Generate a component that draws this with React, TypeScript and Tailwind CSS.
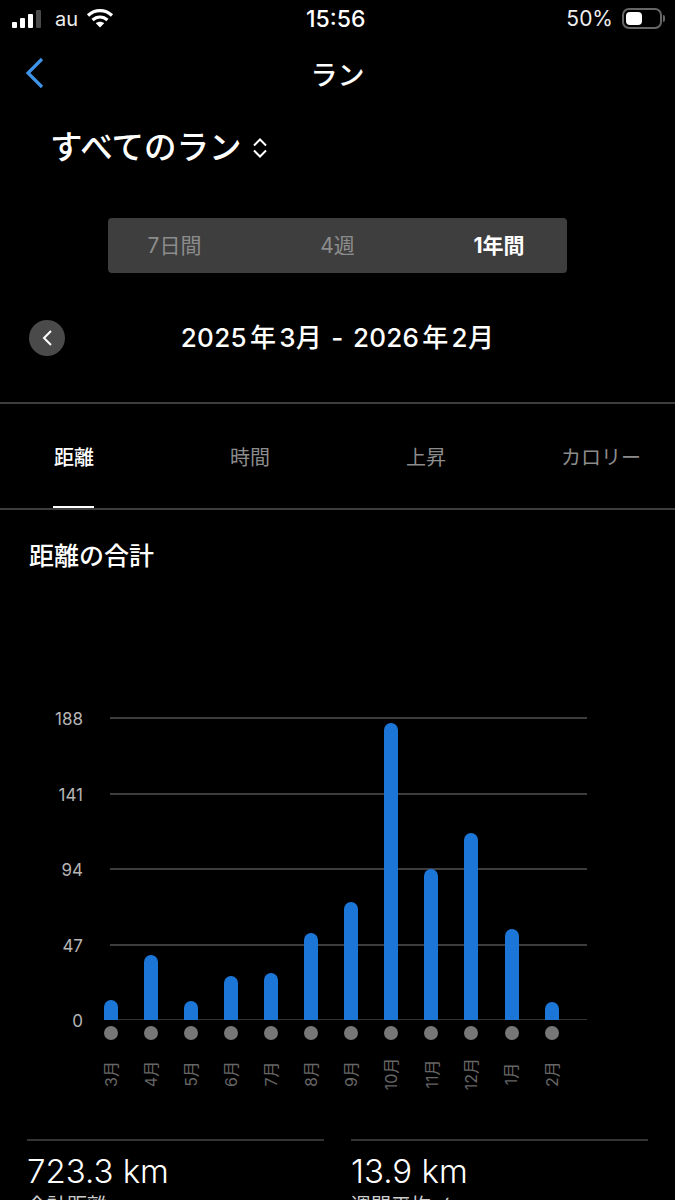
const FONT = "font-['Inter','Noto_Sans_CJK_JP',sans-serif]";

const months = [
  { label: '3月', top: 1000 },
  { label: '4月', top: 955 },
  { label: '5月', top: 1001 },
  { label: '6月', top: 976 },
  { label: '7月', top: 973 },
  { label: '8月', top: 933 },
  { label: '9月', top: 902 },
  { label: '10月', top: 723 },
  { label: '11月', top: 869 },
  { label: '12月', top: 833 },
  { label: '1月', top: 929 },
  { label: '2月', top: 1002 },
];

const ticks = ['188', '141', '94', '47'];

function StatusBar() {
  return (
    <div className="relative flex h-[37px] items-center justify-between pl-[12px] pr-[10px] text-white">
      <div className="flex items-center">
        <div className="flex items-end gap-[3px]">
          <div className="h-[6px] w-[5px] rounded-[1px] bg-white" />
          <div className="h-[10px] w-[5px] rounded-[1px] bg-white" />
          <div className="h-[14px] w-[5px] rounded-[1px] bg-white" />
          <div className="h-[18px] w-[5px] rounded-[1px] bg-[#4a4a4a]" />
        </div>
        <span className="ml-[14px] text-[20px] leading-none font-normal text-[#eeeeee]">au</span>
        <svg className="ml-[8px] -mt-[2px]" width="28" height="20" viewBox="0 0 28 20" fill="none">
          <path d="M2 7.5C9 1 19 1 26 7.5" stroke="white" strokeWidth="3.2" />
          <path d="M6.5 12C11 8 17 8 21.5 12" stroke="white" strokeWidth="3.2" />
          <path d="M14 19.5L9.8 15.2C12 13.2 16 13.2 18.2 15.2Z" fill="white" />
        </svg>
      </div>
      <span className="absolute left-[306px] top-[8px] text-[23px] leading-none font-medium">15:56</span>
      <div className="flex items-center">
        <span className="text-[21px] leading-none text-[#eeeeee]">50%</span>
        <div className="ml-[9px] flex h-[21px] w-[40px] items-center rounded-[7px] border-2 border-[#666666] p-[2px]">
          <div className="h-[13px] w-[16px] rounded-[4px] bg-white" />
        </div>
        <div className="ml-[1px] h-[7px] w-[2px] rounded-r-[2px] bg-[#666666]" />
      </div>
    </div>
  );
}

function YAxis() {
  return (
    <div className="flex w-[83px] flex-col items-end text-[17px] leading-[20px] text-[#b5b5b5]">
      {ticks.map((t) => (
        <div key={t} className="flex h-[75.6px] items-start">
          <span className="-mt-[8px]">{t}</span>
        </div>
      ))}
      <span className="-mt-[8px]">0</span>
    </div>
  );
}

function Chart() {
  return (
    <div className="mt-[146px] flex">
      <YAxis />
      <div className="w-[504px]">
        <div className="relative h-[303px]">
          <div className="ml-[27px] h-full border-b border-[#333333]">
            {[0, 1, 2, 3].map((i) => (
              <div key={i} className="h-[75.6px] border-t-2 border-[#3d3d3d]" />
            ))}
          </div>
          <div className="absolute inset-0 flex items-end pl-[7.6px]">
            {months.map((m) => (
              <div key={m.label} className="flex w-[40.1px] justify-center">
                <div
                  className="w-[14px] rounded-t-full bg-[#1c76d8]"
                  style={{ height: 1020 - m.top }}
                />
              </div>
            ))}
          </div>
        </div>
        <div className="flex pl-[7.6px]">
          {months.map((m) => (
            <div key={m.label} className="flex w-[40.1px] flex-col items-center">
              <div className="mt-[6px] h-[14px] w-[14px] rounded-full bg-[#777777]" />
              <div className="mt-[8px] flex h-[72px] items-start justify-center">
                <span className="mt-[18px] -rotate-90 text-[16px] leading-[16px] whitespace-nowrap text-[#666666]">
                  {m.label}
                </span>
              </div>
            </div>
          ))}
        </div>
      </div>
    </div>
  );
}

function Stat({ value, label }: { value: string; label: string }) {
  return (
    <div className="w-[297px] border-t-2 border-[#333333]">
      <div className="mt-[11px] text-[33px] leading-[38px] font-light text-white">{value}</div>
      <div className="mt-[3px] text-[20px] leading-[26px] whitespace-pre text-[#cccccc]">{label}</div>
    </div>
  );
}

export default function App() {
  return (
    <div className={`h-[1200px] w-[675px] overflow-hidden bg-black ${FONT}`}>
      <StatusBar />

      <div className="relative flex h-[76px] items-center justify-center">
        <svg className="absolute left-[25px] top-[20px]" width="19" height="32" viewBox="0 0 19 32" fill="none">
          <path d="M17 2L3 16L17 30" stroke="#3f94ea" strokeWidth="3.2" />
        </svg>
        <h1 className="text-[27px] leading-none font-medium text-white">ラン</h1>
      </div>

      <div className="mt-[16px] flex h-[38px] items-center pl-[50px]">
        <span className="text-[32.5px] leading-none font-medium text-white">すべてのラン</span>
        <svg className="ml-[11px]" width="16" height="22" viewBox="0 0 16 22" fill="none">
          <path d="M2 8.5L8 2.5L14 8.5M2 13.5L8 19.5L14 13.5" stroke="white" strokeWidth="2" />
        </svg>
      </div>

      <div className="mx-auto mt-[51px] grid h-[55px] w-[459px] grid-cols-3 items-center rounded-[4px] bg-[#3e3e3e] text-[21px] leading-none">
        <span className="-ml-[20px] text-center text-[#8c8c8c]">7日間</span>
        <span className="text-center text-[#8c8c8c]">4週</span>
        <span className="ml-[17px] text-center font-bold text-white">1年間</span>
      </div>

      <div className="relative mt-[47px] flex h-[36px] items-center justify-center">
        <div className="absolute left-[29px] flex h-[36px] w-[36px] items-center justify-center rounded-full bg-[#4a4a4a]">
          <svg width="12" height="18" viewBox="0 0 12 18" fill="none">
            <path d="M10 2L3 9L10 16" stroke="white" strokeWidth="2" />
          </svg>
        </div>
        <span className="text-[26px] leading-none font-medium tracking-[0.3px] text-white">
          2025<span className="mx-[3px]">年</span>3月<span className="mx-[2px]"> - </span>2026<span className="mx-[3px]">年</span>2月
        </span>
      </div>

      <div className="mt-[46px] flex h-[108px] border-y-2 border-[#3d3d3d]">
        {[
          { name: '距離', x: 'w-[176px] pl-[54px]', color: 'text-white font-medium' },
          { name: '時間', x: 'w-[176px] pl-[54px]', color: 'text-[#8c8c8c]' },
          { name: '上昇', x: 'w-[156px] pl-[54px]', color: 'text-[#8c8c8c]' },
          { name: 'カロリー', x: 'flex-1 pl-[53px]', color: 'text-[#8c8c8c]' },
        ].map((t, i) => (
          <div key={t.name} className={`${t.x} relative flex items-center pt-[3px]`}>
            <span className={`text-[20px] leading-none whitespace-nowrap ${t.color}`}>{t.name}</span>
            {i === 0 && <div className="absolute bottom-0 left-[53px] h-[2px] w-[41px] bg-white" />}
          </div>
        ))}
      </div>

      <h2 className="mt-[31px] pl-[29px] text-[25px] leading-[30px] font-medium text-white">距離の合計</h2>

      <Chart />

      <div className="mt-[19px] flex gap-[27px] pl-[27px]">
        <Stat value="723.3 km" label="合計距離" />
        <Stat value="13.9 km" label="週間平均  (" />
      </div>
    </div>
  );
}
